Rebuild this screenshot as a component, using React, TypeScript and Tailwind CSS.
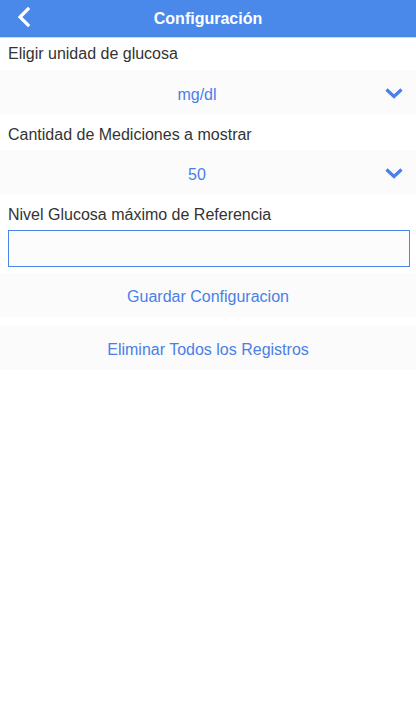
export default function App() {
  return (
    <div className="min-h-[719px] bg-white font-['Liberation_Sans',Arial,sans-serif] text-[16px]">
      {/* Header */}
      <div className="relative flex h-[38px] items-center justify-center border-b border-[#d8d8d8] bg-[#4a89ea]">
        <button className="absolute left-[15px] top-[6px] text-white">
          <svg width="18" height="22" viewBox="0 0 18 22" fill="none">
            <path d="M13 3 L5 11 L13 19" stroke="white" strokeWidth="3.2" strokeLinecap="square" />
          </svg>
        </button>
        <h1 className="text-[16px] font-bold text-white">Configuración</h1>
      </div>

      <div className="flex h-[32px] items-center px-2 text-[#333]">Eligir unidad de glucosa</div>
      <div className="relative flex h-[45px] items-center justify-center bg-[#fbfbfb] pr-[22px] pt-[4px] text-[#4a7fe8]">
        <span>mg/dl</span>
        <svg className="absolute right-[12px] top-[16px]" width="20" height="14" viewBox="0 0 20 14" fill="none">
          <path d="M2.5 3.5 L10 10.5 L17.5 3.5" stroke="#4a7fe8" strokeWidth="3.2" />
        </svg>
      </div>

      <div className="flex h-[35px] items-center px-2 pt-[4px] text-[#333]">Cantidad de Mediciones a mostrar</div>
      <div className="relative flex h-[45px] items-center justify-center bg-[#fbfbfb] pr-[22px] pt-[4px] text-[#4a7fe8]">
        <span>50</span>
        <svg className="absolute right-[12px] top-[16px]" width="20" height="14" viewBox="0 0 20 14" fill="none">
          <path d="M2.5 3.5 L10 10.5 L17.5 3.5" stroke="#4a7fe8" strokeWidth="3.2" />
        </svg>
      </div>

      <div className="flex h-[35px] items-center px-2 pt-[4px] text-[#333]">Nivel Glucosa máximo de Referencia</div>
      <div className="px-2">
        <input className="block h-[37px] w-[402px] border border-[#4a86e8] bg-[#fcfcfc] outline-none" />
      </div>

      <button className="mt-[6px] flex h-[44px] w-full items-center justify-center bg-[#fbfbfb] pt-[4px] text-[#4a7fe8]">
        Guardar Configuracion
      </button>
      <button className="mt-[8px] flex h-[45px] w-full items-center justify-center bg-[#fbfbfb] pt-[4px] text-[#4a7fe8]">
        Eliminar Todos los Registros
      </button>
    </div>
  );
}
